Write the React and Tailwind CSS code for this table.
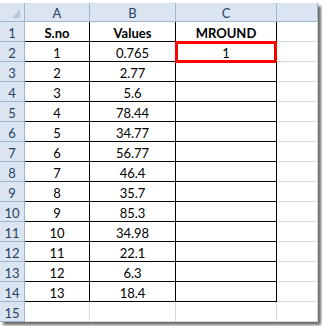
import React from 'react';

const rows = [
  ['1', '0.765'],
  ['2', '2.77'],
  ['3', '5.6'],
  ['4', '78.44'],
  ['5', '34.77'],
  ['6', '56.77'],
  ['7', '46.4'],
  ['8', '35.7'],
  ['9', '85.3'],
  ['10', '34.98'],
  ['11', '22.1'],
  ['12', '6.3'],
  ['13', '18.4'],
];

const head = 'flex items-end justify-center pb-px bg-[#dbe5f1] text-[#27415f] border-r border-b border-[#9eb6ce]';
const cell = 'flex items-end justify-center pb-px border-r border-b';

const App = () => {
  return (
    <div className="w-[322px] h-[326px] bg-white pt-[3px] overflow-hidden" style={{ fontFamily: 'Lato, "Open Sans", sans-serif' }}>
      <div className="w-[318px] grid grid-cols-[25px_65px_86px_101px_41px] grid-rows-[19px_repeat(15,20px)] text-[13px] leading-none text-black bg-white shadow-[3px_3px_3px_rgba(0,0,0,0.6)]">
        {/* column headers */}
        <div className={`${head} relative`}>
          <svg className="absolute right-[4px] bottom-[3px]" width="8" height="9" viewBox="0 0 8 9">
            <polygon points="8,0 8,9 0,9" fill="#b7c6d8" />
          </svg>
        </div>
        <div className={head}>A</div>
        <div className={head}>B</div>
        <div className={head}>C</div>
        <div className={head}></div>

        {/* row 1 */}
        <div className={head}>1</div>
        <div className={`${cell} border-black font-bold`}>S.no</div>
        <div className={`${cell} border-black font-bold`}>Values</div>
        <div className={`${cell} border-black font-bold`}>MROUND</div>
        <div className={`${cell} border-[#d9d9d9]`}></div>

        {rows.map(([n, v], i) => (
          <React.Fragment key={n}>
            <div className={head}>{i + 2}</div>
            <div className={`${cell} border-black`}>{n}</div>
            <div className={`${cell} border-black`}>{v}</div>
            <div className={`${cell} border-black relative`}>
              {i === 0 && (
                <>
                  <div className="absolute -left-px -top-px -right-px -bottom-[2px] border-[3px] border-[#ff0000]" />
                  <span className="relative">1</span>
                </>
              )}
            </div>
            <div className={`${cell} border-[#d9d9d9]`}></div>
          </React.Fragment>
        ))}

        {/* row 15 */}
        <div className={head}>15</div>
        <div className={`${cell} border-[#d9d9d9]`}></div>
        <div className={`${cell} border-[#d9d9d9]`}></div>
        <div className={`${cell} border-[#d9d9d9]`}></div>
        <div className={`${cell} border-[#d9d9d9]`}></div>
      </div>
    </div>
  );
};

export default App;
